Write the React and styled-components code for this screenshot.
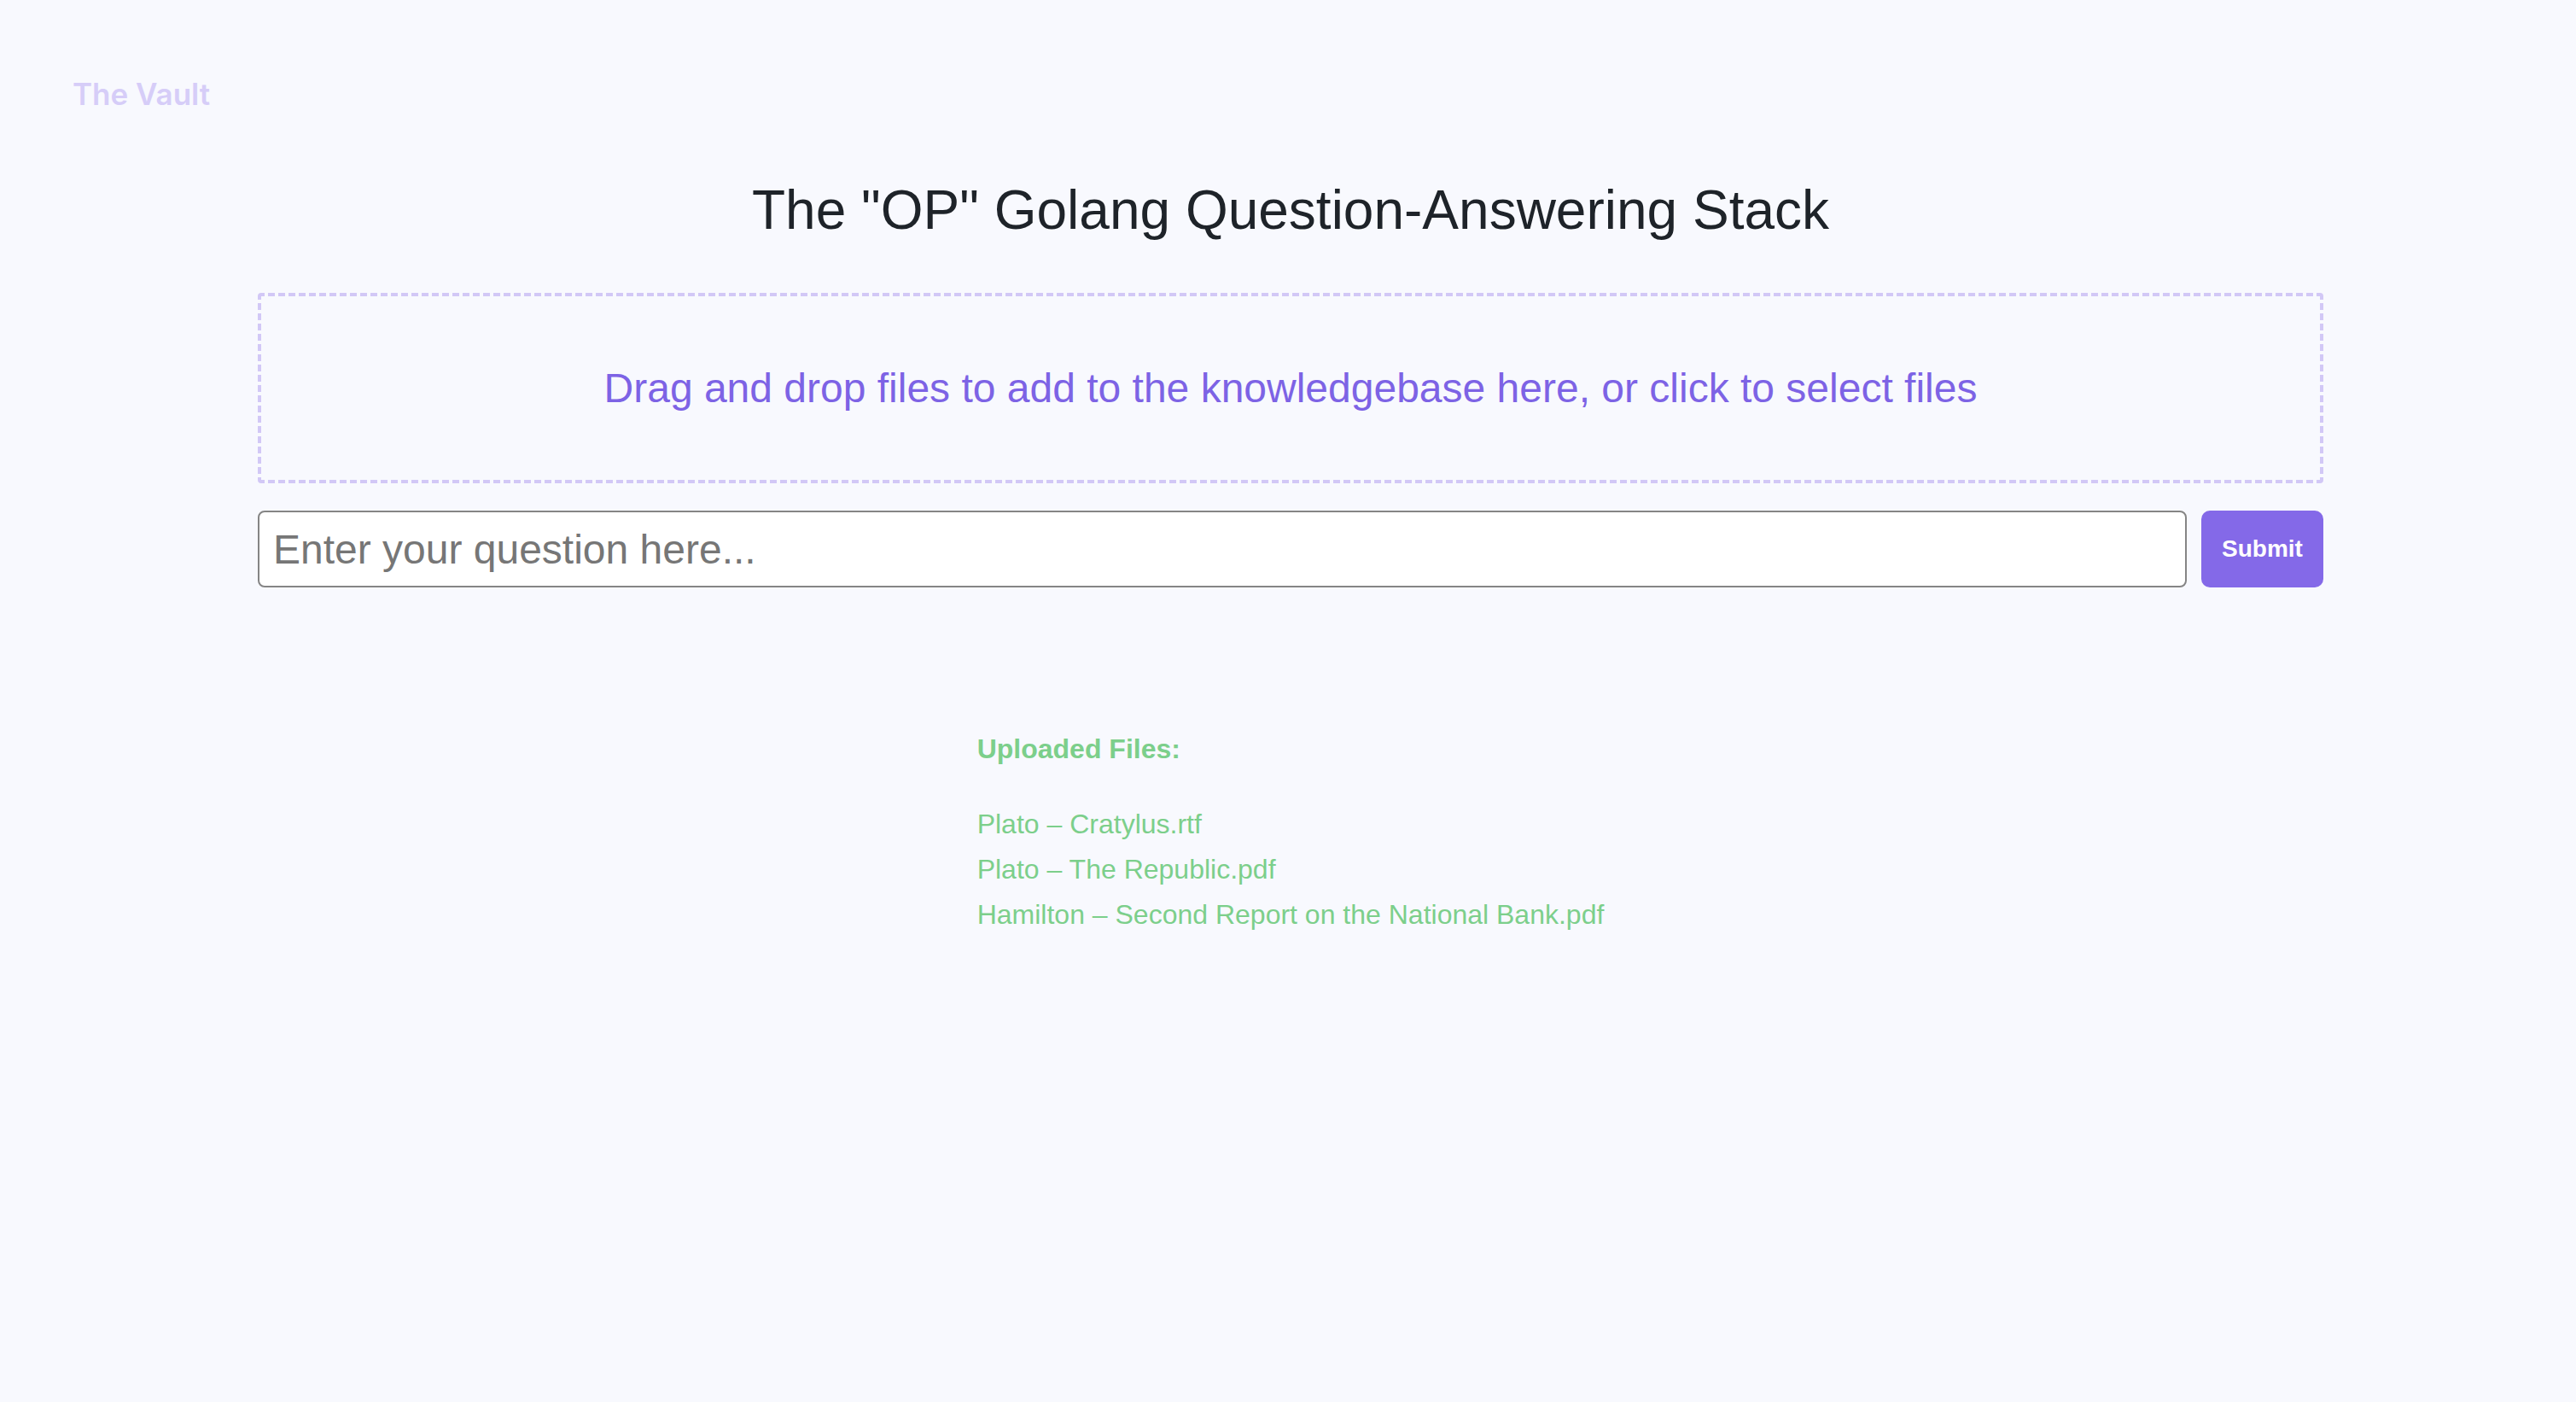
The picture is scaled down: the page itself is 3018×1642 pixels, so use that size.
import React from "react";
import styled, { createGlobalStyle } from "styled-components";

const Global = createGlobalStyle`
  html, body {
    margin: 0;
    padding: 0;
    background: #f8f9fe;
  }
  body {
    font-family: "Liberation Sans", Arial, sans-serif;
    min-height: 1642px;
  }
  * { box-sizing: border-box; }
`;

const Page = styled.div`
  min-height: 1642px;
  background: #f8f9fe;
  padding: 92px 0 0 6px;
  display: flex;
  flex-direction: column;
`;

const Brand = styled.div`
  font-family: Inter, "Noto Sans", sans-serif;
  font-weight: 600;
  font-size: 35px;
  line-height: 36px;
  color: #d6cdf8;
  padding-left: 79px;
`;

const Main = styled.main`
  width: 2420px;
  margin: 0 auto;
  display: flex;
  flex-direction: column;
`;

const Title = styled.h1`
  margin: 86px 0 0 0;
  font-family: "Liberation Sans", Arial, sans-serif;
  font-weight: 400;
  font-size: 64px;
  line-height: 64px;
  color: #1e2329;
  text-align: center;
`;

const dash = "#d2c8f6";

const DropZone = styled.div`
  margin-top: 65px;
  height: 223px;
  border-radius: 4px;
  background:
    repeating-linear-gradient(90deg, ${dash} 0 8px, transparent 8px 12px) top left / 100% 4px no-repeat,
    repeating-linear-gradient(90deg, ${dash} 0 8px, transparent 8px 12px) bottom left / 100% 4px no-repeat,
    repeating-linear-gradient(180deg, ${dash} 0 8px, transparent 8px 12px) top left / 4px 100% no-repeat,
    repeating-linear-gradient(180deg, ${dash} 0 8px, transparent 8px 12px) top right / 4px 100% no-repeat;
  display: flex;
  align-items: center;
  justify-content: center;
  cursor: pointer;
`;

const DropText = styled.p`
  margin: 0;
  font-size: 48px;
  line-height: 48px;
  color: #7d63e5;
`;

const QueryRow = styled.form`
  margin-top: 32px;
  display: flex;
  gap: 17px;
  height: 90px;
`;

const QuestionInput = styled.input`
  flex: 1;
  height: 90px;
  border: 2px solid #858585;
  border-radius: 8px;
  background: #ffffff;
  padding: 0 16px;
  font-family: "Liberation Sans", Arial, sans-serif;
  font-size: 48px;
  color: #222;
  outline: none;
  &::placeholder {
    color: #767676;
  }
`;

const SubmitButton = styled.button`
  width: 143px;
  height: 90px;
  border: none;
  border-radius: 10px;
  background: #8469e8;
  color: #ffffff;
  font-family: "Liberation Sans", Arial, sans-serif;
  font-weight: 700;
  font-size: 28px;
  cursor: pointer;
`;

const Uploaded = styled.section`
  align-self: center;
  margin-top: 173px;
  color: #7ccf8b;
`;

const UploadedHeading = styled.h3`
  margin: 0;
  font-size: 32px;
  line-height: 32px;
  font-weight: 700;
`;

const FileList = styled.ul`
  list-style: none;
  margin: 46px 0 0 0;
  padding: 0;
`;

const FileItem = styled.li`
  font-size: 32px;
  line-height: 53px;
  white-space: nowrap;
`;

const files = [
  "Plato – Cratylus.rtf",
  "Plato – The Republic.pdf",
  "Hamilton – Second Report on the National Bank.pdf",
];

export default function App() {
  return (
    <>
      <Global />
      <Page>
        <Brand>The Vault</Brand>
        <Main>
          <Title>The "OP" Golang Question-Answering Stack</Title>
          <DropZone>
            <DropText>
              Drag and drop files to add to the knowledgebase here, or click to select files
            </DropText>
          </DropZone>
          <QueryRow onSubmit={(e) => e.preventDefault()}>
            <QuestionInput type="text" placeholder="Enter your question here..." />
            <SubmitButton type="submit">Submit</SubmitButton>
          </QueryRow>
          <Uploaded>
            <UploadedHeading>Uploaded Files:</UploadedHeading>
            <FileList>
              {files.map((f) => (
                <FileItem key={f}>{f}</FileItem>
              ))}
            </FileList>
          </Uploaded>
        </Main>
      </Page>
    </>
  );
}
